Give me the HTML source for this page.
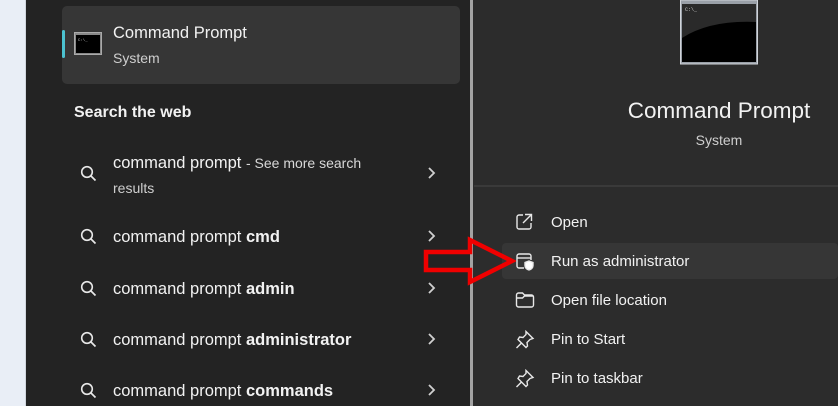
<!DOCTYPE html>
<html><head><style>
*{margin:0;padding:0;box-sizing:border-box}
body{width:838px;height:406px;overflow:hidden;position:relative;background:#232323;font-family:"Liberation Sans",sans-serif;color:#fff}
.a{position:absolute}
.strip{left:0;top:0;width:26px;height:406px;background:#e9eef6;border-right:1px solid #d0d6de}
.left{left:27px;top:0;width:443px;height:406px;background:#232323}
.div{left:470px;top:0;width:3px;height:406px;background:#a3a3a3}
.right{left:473px;top:0;width:365px;height:406px;background:#2c2c2c}
.sel{left:62px;top:6px;width:398px;height:78px;background:#363636;border-radius:5px}
.acc{left:62px;top:30px;width:3px;height:28px;background:#4cc2d0;border-radius:2px}
.t{font-size:16.5px;white-space:nowrap;color:#f2f2f2}
.s{font-size:14px;color:#cfcfcf}
.row{left:502px;width:336px;height:36px}
</style></head><body>
<div class="a strip"></div>
<div class="a left"></div>
<div class="a div"></div>
<div class="a right"></div>
<div class="a sel"></div>
<div class="a acc"></div>
<svg class="a" style="left:74px;top:32px" width="29" height="24"><rect x="0.5" y="0.5" width="27" height="22" fill="#888" stroke="#aaa"/><rect x="2" y="3" width="24" height="18" fill="#000"/><text x="4" y="9" font-size="4" fill="#ccc" font-family="Liberation Mono">C:\_</text></svg>
<div class="a t" style="left:113px;top:24px">Command Prompt</div>
<div class="a s" style="left:113px;top:50px">System</div>
<div class="a t" style="left:74px;top:104px;font-weight:bold;font-size:16px">Search the web</div>

<svg width="0" height="0" style="position:absolute"><defs><g id="q"><circle cx="7" cy="7" r="5.3" fill="none" stroke="#e8e8e8" stroke-width="1.6"/><line x1="11" y1="11" x2="15.5" y2="15.5" stroke="#e8e8e8" stroke-width="1.7"/></g><g id="c"><polyline points="2,2 7,7 2,12" fill="none" stroke="#d0d0d0" stroke-width="1.8"/></g></defs></svg>

<svg class="a" style="left:80px;top:165px" width="18" height="18"><use href="#q"/></svg>
<div class="a t" style="left:113px;top:154px">command prompt <span style="font-size:14px;color:#d8d8d8">- See more search</span></div>
<div class="a s" style="left:113px;top:180px">results</div>
<svg class="a" style="left:427px;top:166px" width="12" height="15"><use href="#c"/></svg>

<svg class="a" style="left:80px;top:228px" width="18" height="18"><use href="#q"/></svg>
<div class="a t" style="left:113px;top:228px">command prompt <b>cmd</b></div>
<svg class="a" style="left:427px;top:229px" width="12" height="15"><use href="#c"/></svg>

<svg class="a" style="left:80px;top:280px" width="18" height="18"><use href="#q"/></svg>
<div class="a t" style="left:113px;top:280px">command prompt <b>admin</b></div>
<svg class="a" style="left:427px;top:281px" width="12" height="15"><use href="#c"/></svg>

<svg class="a" style="left:80px;top:331px" width="18" height="18"><use href="#q"/></svg>
<div class="a t" style="left:113px;top:331px">command prompt <b>administrator</b></div>
<svg class="a" style="left:427px;top:332px" width="12" height="15"><use href="#c"/></svg>

<svg class="a" style="left:80px;top:382px" width="18" height="18"><use href="#q"/></svg>
<div class="a t" style="left:113px;top:382px">command prompt <b>commands</b></div>
<svg class="a" style="left:427px;top:383px" width="12" height="15"><use href="#c"/></svg>

<!-- right -->
<svg class="a" style="left:680px;top:0px" width="79" height="65"><rect x="0.5" y="0" width="77" height="64" fill="#9aa0a8" stroke="#d0d4da"/><rect x="2" y="4" width="74" height="58" fill="#000"/><path d="M2 4 H76 V22 Q30 20 2 38 Z" fill="#2a2a2a"/><text x="5" y="11" font-size="5" fill="#ccc" font-family="Liberation Mono">C:\_</text></svg>
<div class="a" style="left:560px;top:98px;width:318px;text-align:center;font-size:22.5px;color:#f2f2f2">Command Prompt</div>
<div class="a s" style="left:560px;top:132px;width:318px;text-align:center">System</div>
<div class="a" style="left:474px;top:185px;width:364px;height:2px;background:#3a3a3a"></div>
<div class="a row" style="top:243px;background:#363636;border-radius:4px"></div>

<svg class="a" style="left:515px;top:213px" width="18" height="18" fill="none" stroke="#e8e8e8" stroke-width="1.4"><path d="M8 2H4a2 2 0 0 0-2 2v10a2 2 0 0 0 2 2h10a2 2 0 0 0 2-2v-4"/><path d="M10 1.5h6.5V8M16.5 1.5L8 10"/></svg>
<div class="a t" style="left:551px;top:214px;font-size:15px">Open</div>
<svg class="a" style="left:515px;top:252px" width="20" height="20" fill="none" stroke="#e8e8e8" stroke-width="1.4"><path d="M9 16H4a2 2 0 0 1-2-2V4a2 2 0 0 1 2-2h10a2 2 0 0 1 2 2v4"/><path d="M2 6h14"/><path d="M14 9l4 1.5v3c0 2.5-2 4-4 4.5-2-.5-4-2-4-4.5v-3z" fill="#fff"/></svg>
<div class="a t" style="left:551px;top:253px;font-size:15px">Run as administrator</div>
<svg class="a" style="left:515px;top:291px" width="20" height="18" fill="none" stroke="#e8e8e8" stroke-width="1.4"><path d="M1.5 4a2 2 0 0 1 2-2h4l2 2h7a2 2 0 0 1 2 2v8a2 2 0 0 1-2 2h-13a2 2 0 0 1-2-2z"/><path d="M1.5 7h6l2-2h9"/></svg>
<div class="a t" style="left:551px;top:292px;font-size:15px">Open file location</div>
<svg class="a" style="left:515px;top:330px" width="20" height="20" fill="none" stroke="#e8e8e8" stroke-width="1.4"><path d="M11 1.5l7 7-3 1-3 3 .5 3.5-1.5 1.5-8-8L4.5 7 8 7.5l3-3z"/><path d="M6.5 13l-5 5"/></svg>
<div class="a t" style="left:551px;top:331px;font-size:15px">Pin to Start</div>
<svg class="a" style="left:515px;top:369px" width="20" height="20" fill="none" stroke="#e8e8e8" stroke-width="1.4"><path d="M11 1.5l7 7-3 1-3 3 .5 3.5-1.5 1.5-8-8L4.5 7 8 7.5l3-3z"/><path d="M6.5 13l-5 5"/></svg>
<div class="a t" style="left:551px;top:370px;font-size:15px">Pin to taskbar</div>

<svg class="a" style="left:420px;top:234px" width="96" height="56"><path d="M6 18H50V6L92 27 50 48V36H6Z" fill="none" stroke="#f00000" stroke-width="4.5" stroke-linejoin="miter"/></svg>
</body></html>
